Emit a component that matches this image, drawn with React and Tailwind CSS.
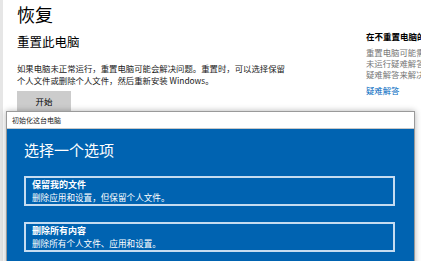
export default function App() {
  return (
    <div className="relative w-[421px] h-[261px] overflow-hidden bg-white font-['Noto_Sans_CJK_SC',sans-serif] text-black">
      <div className="flex h-full">
        <div className="w-[3px] shrink-0 bg-[#e6e6e6]" />
        <div className="w-[346px] shrink-0 pl-[14px] whitespace-nowrap">
          <h1 className="pt-[2px] text-[18px] leading-[24px]">恢复</h1>
          <h2 className="mt-[8px] text-[12.5px] leading-[16px]">重置此电脑</h2>
          <p className="mt-[12px] text-[8.4px] leading-[12px] text-[#1a1a1a]">
            如果电脑未正常运行，重置电脑可能会解决问题。重置时，可以选择保留
            <br />
            个人文件或删除个人文件，然后重新安装 Windows。
          </p>
          <button className="mt-[1px] w-[54px] h-[20px] bg-[#cccccc] text-[8.5px] leading-[20px]">开始</button>
        </div>
        <div className="pt-[30px] pl-[17px] whitespace-nowrap">
          <div className="text-[8.5px] leading-[12px] font-semibold">在不重置电脑的情况下修复问题</div>
          <div className="mt-[5px] text-[8.4px] leading-[11px] text-[#767676]">
            重置电脑可能需要一段时间。如果尚
            <br />
            未运行疑难解答，请先尝试运行
            <br />
            疑难解答来解决问题。
          </div>
          <div className="mt-[4px] text-[8.4px] leading-[12px] text-[#0067c0]">疑难解答</div>
        </div>
      </div>

      <div className="absolute left-[6px] top-[111px] w-[409px] h-[160px] border border-[#9a9a9a] bg-white shadow-[0_0_6px_rgba(0,0,0,0.3)] flex flex-col">
        <div className="h-[17px] shrink-0 pl-[5px] text-[7px] leading-[17px] text-[#222] border-b border-[#c8c8c8]">初始化这台电脑</div>
        <div className="flex-1 bg-[#0063b1] pl-[17px] pt-[11px] text-white">
          <div className="text-[15px] leading-[20px]">选择一个选项</div>
          <div className="mt-[16px] w-[371px] h-[30px] border-2 border-[#c5dcf1] pl-[6px] pt-[1px]">
            <div className="text-[9px] leading-[12px] font-bold">保留我的文件</div>
            <div className="text-[8.6px] leading-[12px]">删除应用和设置，但保留个人文件。</div>
          </div>
          <div className="mt-[16px] w-[371px] h-[30px] border-2 border-[#c5dcf1] pl-[6px] pt-[1px]">
            <div className="text-[9px] leading-[12px] font-bold">删除所有内容</div>
            <div className="text-[8.6px] leading-[12px]">删除所有个人文件、应用和设置。</div>
          </div>
        </div>
      </div>
    </div>
  );
}
